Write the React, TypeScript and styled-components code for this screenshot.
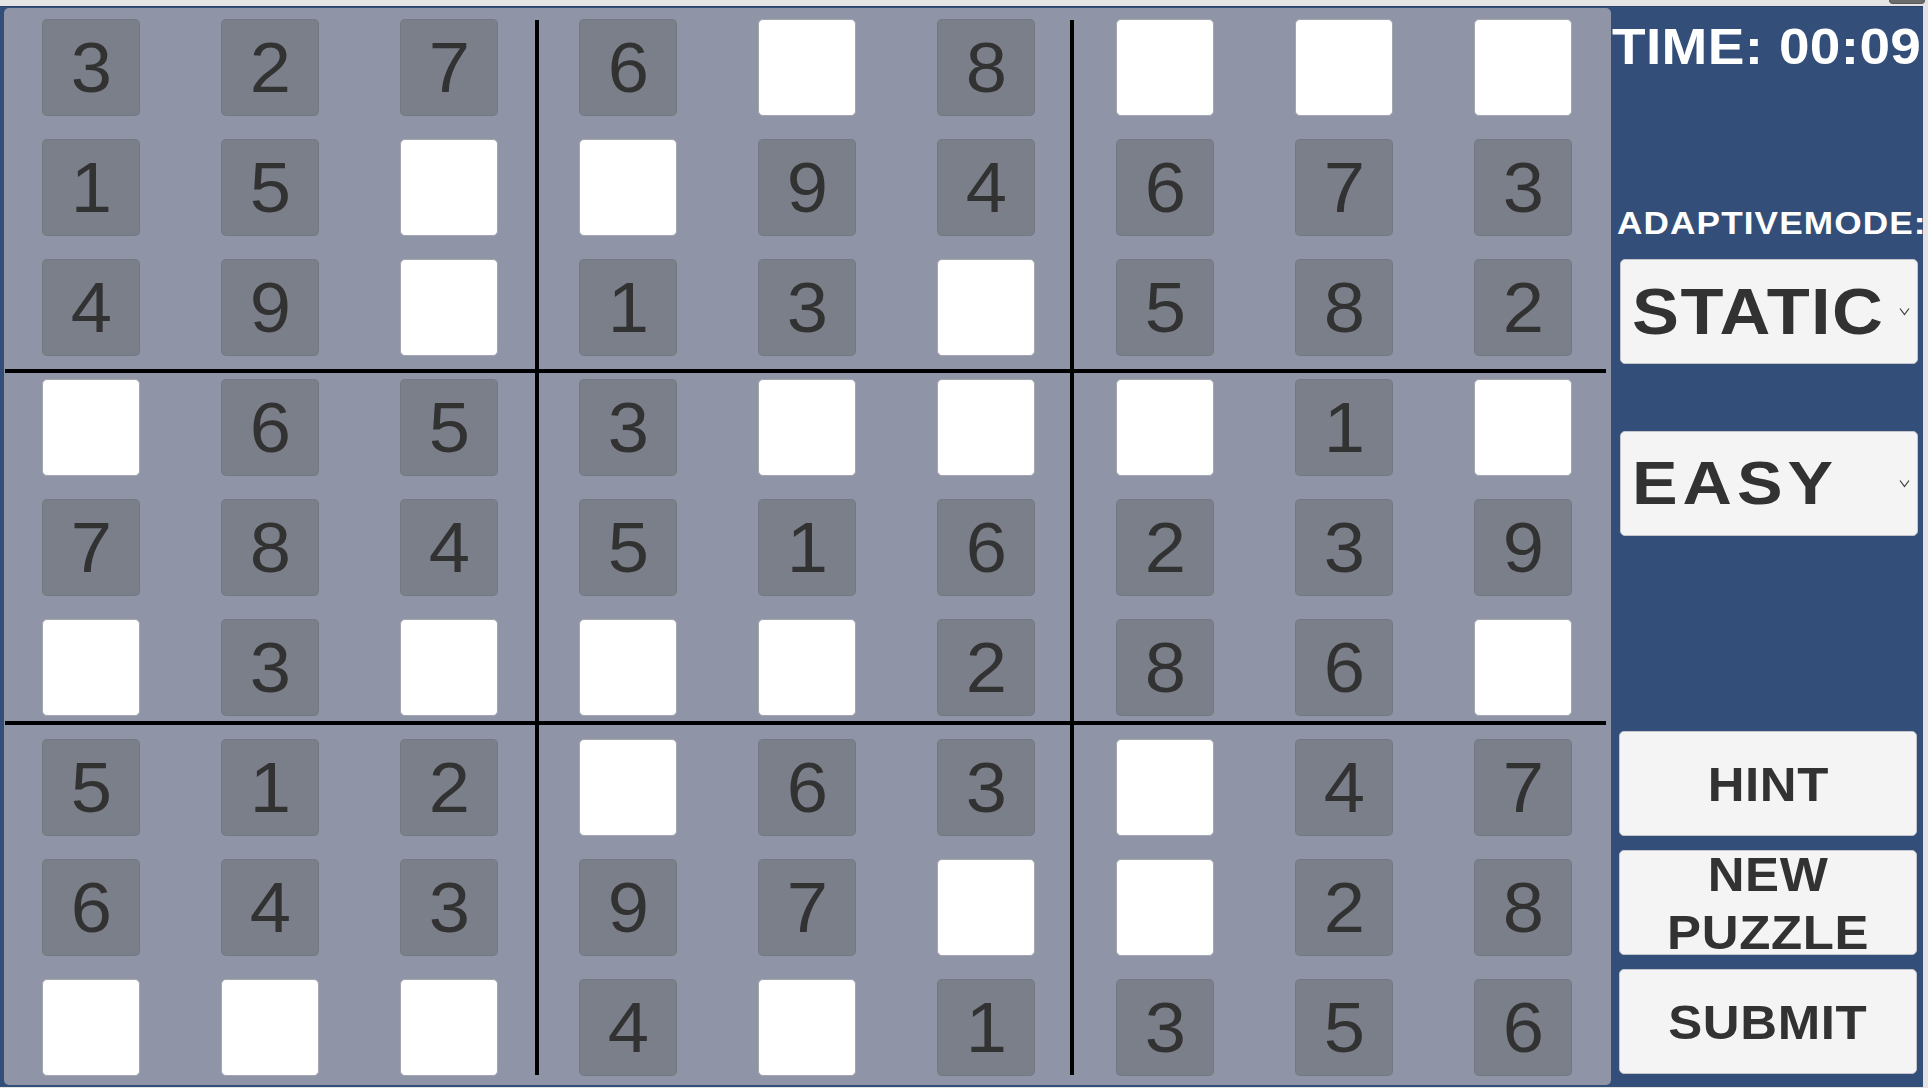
import React from 'react';
import styled, { createGlobalStyle } from 'styled-components';

const GlobalStyle = createGlobalStyle`
  html, body {
    margin: 0;
    padding: 0;
    background: #e4e4e4;
  }
  body {
    font-family: "Liberation Sans", Arial, sans-serif;
  }
`;

const Page = styled.div`
  width: 1928px;
  height: 1088px;
  display: flex;
  flex-direction: column;
  background: #e4e4e4;
  overflow: hidden;
`;

const TopStrip = styled.div`
  height: 6px;
  display: flex;
  justify-content: flex-end;
  padding-right: 3px;
`;

const WindowTab = styled.div`
  width: 34px;
  height: 3px;
  border: 1px solid #5a5a5a;
  border-top: none;
  border-radius: 0 0 4px 4px;
  background: #6b6b6b;
`;

const Screen = styled.div`
  width: 1923px;
  height: 1081px;
  display: flex;
  background: #334e78;
  border-top: 1px solid #2b4368;
  box-sizing: border-box;
`;

const Board = styled.div`
  position: relative;
  width: 1607px;
  height: 1077px;
  margin: 1px 0 0 4px;
  box-sizing: border-box;
  padding: 11px 0 0 38px;
  background: #8f95a6;
  border-radius: 5px;
  display: grid;
  grid-template-columns: repeat(9, 98px);
  grid-auto-rows: 97px;
  column-gap: 81px;
  row-gap: 23px;
  align-content: start;
`;

const Cell = styled.div<{ $blank: boolean }>`
  box-sizing: border-box;
  border-radius: 5px;
  display: flex;
  align-items: center;
  justify-content: center;
  background: ${(p) => (p.$blank ? '#ffffff' : '#7b7f8a')};
  border: 1px solid ${(p) => (p.$blank ? '#a3a6ae' : 'rgba(0, 0, 0, 0.05)')};
  color: #323232;
  font-size: 70px;
  line-height: 70px;
  font-weight: 400;
`;

const Digit = styled.span`
  display: inline-block;
  transform: scaleX(1.06);
`;

const Divider = styled.div<{ $vertical: boolean; $at: number }>`
  position: absolute;
  background: #000;
  ${(p) =>
    p.$vertical
      ? `left: ${p.$at}px; top: 12px; width: 4px; height: 1055px;`
      : `top: ${p.$at}px; left: 1px; height: 4px; width: 1601px;`}
`;

const Sidebar = styled.div`
  flex: 1;
  display: flex;
  flex-direction: column;
  padding: 15px 0 13px 0;
  box-sizing: border-box;
  min-width: 0;
`;

// Bold labels in the game render a little wider than Arial Bold
const Wide = styled.span<{ $scale: number; $spacing: number; $origin?: string }>`
  display: inline-block;
  white-space: nowrap;
  letter-spacing: ${(p) => p.$spacing}px;
  transform: scaleX(${(p) => p.$scale});
  transform-origin: ${(p) => p.$origin ?? 'left center'};
`;

const Timer = styled.div`
  color: #ffffff;
  font-weight: 700;
  font-size: 50px;
  line-height: 50px;
  white-space: nowrap;
  padding-left: 1px;
`;

const ModeLabel = styled.div`
  margin-top: 135px;
  color: #ffffff;
  font-weight: 700;
  font-size: 32px;
  line-height: 32px;
  white-space: nowrap;
  padding-left: 6px;
`;

const Dropdown = styled.div<{ $gap: number }>`
  margin: ${(p) => p.$gap}px 0 0 9px;
  width: 298px;
  height: 105px;
  box-sizing: border-box;
  background: #f4f4f4;
  border: 1px solid #c4c6cb;
  border-radius: 5px;
  display: flex;
  align-items: center;
  padding: 0 7px 0 11px;
`;

const DropdownText = styled.div<{ $size: number }>`
  flex: 1;
  color: #323232;
  font-weight: 700;
  font-size: ${(p) => p.$size}px;
  line-height: ${(p) => p.$size}px;
  white-space: nowrap;
`;

const Chevron = styled.svg`
  width: 11px;
  height: 9px;
  flex: none;
`;

const ButtonStack = styled.div`
  margin-top: auto;
  display: flex;
  flex-direction: column;
  gap: 14px;
  padding-left: 8px;
`;

const ActionButton = styled.button`
  width: 298px;
  height: 105px;
  box-sizing: border-box;
  background: #f4f4f4;
  border: 1px solid #c4c6cb;
  border-radius: 5px;
  color: #323232;
  font-family: "Liberation Sans", Arial, sans-serif;
  font-weight: 700;
  font-size: 49px;
  line-height: 58px;
  padding: 0;
  display: flex;
  flex-direction: column;
  align-items: center;
  justify-content: center;
  overflow: visible;
`;

const puzzle = [
  '327 6_8 ___',
  '15_ _94 673',
  '49_ 13_ 582',
  '_65 3__ _1_',
  '784 516 239',
  '_3_ __2 86_',
  '512 _63 _47',
  '643 97_ _28',
  '___ 4_1 356',
];

const rows = puzzle.map((r) => r.replace(/ /g, '').split(''));

const ChevronIcon = () => (
  <Chevron viewBox="0 0 11 9">
    <polyline points="1,1.5 5.5,7.5 10,1.5" fill="none" stroke="#3a3a3a" strokeWidth="1.2" />
  </Chevron>
);

const ButtonLabel = ({ children }: { children: React.ReactNode }) => (
  <Wide $scale={1.04} $spacing={0.6} $origin="center">
    {children}
  </Wide>
);

export default function App() {
  return (
    <>
      <GlobalStyle />
      <Page>
        <TopStrip>
          <WindowTab />
        </TopStrip>
        <Screen>
          <Board>
            {rows.flatMap((row, r) =>
              row.map((v, c) => (
                <Cell key={`${r}-${c}`} $blank={v === '_'}>
                  {v === '_' ? null : <Digit>{v}</Digit>}
                </Cell>
              ))
            )}
            <Divider $vertical $at={531} />
            <Divider $vertical $at={1066} />
            <Divider $vertical={false} $at={361} />
            <Divider $vertical={false} $at={713} />
          </Board>
          <Sidebar>
            <Timer>
              <Wide $scale={1.1} $spacing={0.3}>TIME: 00:09</Wide>
            </Timer>
            <ModeLabel>
              <Wide $scale={1.1} $spacing={1}>ADAPTIVEMODE:</Wide>
            </ModeLabel>
            <Dropdown $gap={20}>
              <DropdownText $size={64}>
                <Wide $scale={1.1} $spacing={1.3}>STATIC</Wide>
              </DropdownText>
              <ChevronIcon />
            </Dropdown>
            <Dropdown $gap={67}>
              <DropdownText $size={61}>
                <Wide $scale={1.12} $spacing={4.5}>EASY</Wide>
              </DropdownText>
              <ChevronIcon />
            </Dropdown>
            <ButtonStack>
              <ActionButton>
                <ButtonLabel>HINT</ButtonLabel>
              </ActionButton>
              <ActionButton>
                <ButtonLabel>NEW</ButtonLabel>
                <ButtonLabel>PUZZLE</ButtonLabel>
              </ActionButton>
              <ActionButton>
                <ButtonLabel>SUBMIT</ButtonLabel>
              </ActionButton>
            </ButtonStack>
          </Sidebar>
        </Screen>
      </Page>
    </>
  );
}
